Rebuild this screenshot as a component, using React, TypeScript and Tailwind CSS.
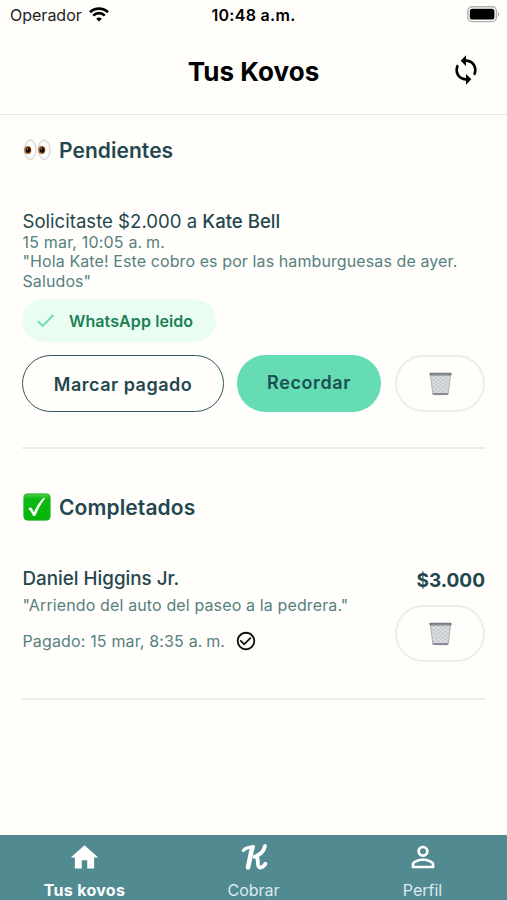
import React from "react";
import {
  MdCheck,
  MdCheckCircleOutline,
  MdHome,
  MdPersonOutline,
  MdSync,
} from "react-icons/md";

function WifiIcon() {
  return (
    <svg width="20" height="15" viewBox="0 0 20 15" fill="none" stroke="#000" strokeWidth="2.7">
      <path d="M1 5.3a12.8 12.8 0 0 1 18 0" />
      <path d="M4.2 8.6a8.2 8.2 0 0 1 11.6 0" />
      <path d="M10 14.6 7.2 11.8a4 4 0 0 1 5.6 0Z" fill="#000" stroke="none" />
    </svg>
  );
}

function BatteryIcon() {
  return (
    <svg width="33" height="17" viewBox="0 0 33 17">
      <rect x="0.8" y="0.8" width="28.6" height="14.8" rx="4.4" fill="none" stroke="#b0b0ae" strokeWidth="1.4" />
      <rect x="2.8" y="2.8" width="24.6" height="10.8" rx="2.6" fill="#000" />
      <path d="M31 5.8c1.6.7 1.6 4.1 0 4.8Z" fill="#b0b0ae" />
    </svg>
  );
}

function EyesIcon() {
  return (
    <svg width="28" height="28" viewBox="0 0 28 28">
      <defs>
        <radialGradient id="eyeWhite">
          <stop offset="0.7" stopColor="#fefefe" />
          <stop offset="1" stopColor="#e6e4e7" />
        </radialGradient>
      </defs>
      {[7.2, 21.2].map((cx) => (
        <g key={cx}>
          <ellipse cx={cx} cy="13.7" rx="6" ry="10" fill="url(#eyeWhite)" stroke="#d4d2d4" strokeWidth="0.9" />
          <ellipse cx={cx - 2.4} cy="14" rx="3.5" ry="3.9" fill="#a05c22" />
          <ellipse cx={cx - 2} cy="14" rx="2.3" ry="2.7" fill="#170b06" />
          <circle cx={cx - 2.9} cy="12.8" r="0.6" fill="#fff" />
        </g>
      ))}
    </svg>
  );
}

function DoneIcon() {
  return (
    <svg width="28" height="28" viewBox="0 0 28 28">
      <defs>
        <linearGradient id="doneGreen" x1="0" y1="0" x2="0" y2="1">
          <stop offset="0" stopColor="#4fcf4f" />
          <stop offset="0.2" stopColor="#0cba0f" />
          <stop offset="1" stopColor="#05b709" />
        </linearGradient>
      </defs>
      <rect x="0.8" y="0.8" width="26.4" height="26.4" rx="3.6" fill="url(#doneGreen)" stroke="#29ad2c" strokeWidth="0.8" />
      <path d="M5.2 15.4 7.6 14.2c1.5 1.5 2.5 3 3.5 5 2.3-5.6 5.3-10.2 9.2-14.1l2 .2C18 10.7 14.7 16.6 12.3 23h-2.1c-1.3-3-2.8-5.5-5-7.6Z" fill="#fff" />
    </svg>
  );
}

function TrashIcon() {
  return (
    <svg width="23" height="24" viewBox="0 0 24 25">
      <defs>
        <pattern id="mesh" width="5" height="4" patternUnits="userSpaceOnUse">
          <path d="M0 0 5 4M5 0 0 4" stroke="#a9adb6" strokeWidth="0.7" />
        </pattern>
      </defs>
      <path d="M1.4 2h21.2l-2.5 21.2c-.1.7-16.1.7-16.2 0Z" fill="#e4e6e9" />
      <path d="M1.4 2h21.2l-2.5 21.2c-.1.7-16.1.7-16.2 0Z" fill="url(#mesh)" stroke="#a0a3aa" strokeWidth="0.8" />
      <path d="M4 22h16l-.3 1.9H4.3Z" fill="#8a8d98" />
      <rect x="0.5" y="0.7" width="23" height="2.9" rx="1" fill="#73757e" />
      <path d="M2.5 2.3h19" stroke="#a3a5ae" strokeWidth="0.7" />
    </svg>
  );
}

function KovoLogo() {
  return (
    <svg width="28" height="28" viewBox="0 0 28 28" fill="none" stroke="#fff" strokeLinecap="round" strokeLinejoin="round">
      <path d="M3.4 7.4C5.6 4.6 8.5 4.2 13.4 3.6" strokeWidth="3.2" />
      <path d="M12.4 4.8C10.4 11 9.800 17 8 24.400" strokeWidth="4.600" />
      <path d="M25 3C23.800 8.200 19.500 12.200 14.500 13.900" strokeWidth="3.800" />
      <path d="M16.400 13.600C19.400 15.800 16.200 23.800 19.700 24.500C22 24.800 23.800 23.300 25.400 20.800" strokeWidth="3.800" />
    </svg>
  );
}

function DeleteButton() {
  return (
    <button aria-label="Eliminar" className="flex h-[57px] w-[90px] items-center justify-center rounded-full border-2 border-[#ededeb]">
      <TrashIcon />
    </button>
  );
}

function Tab({ icon, label, active = false }: { icon: React.ReactNode; label: string; active?: boolean }) {
  return (
    <a className={`flex flex-1 flex-col items-center pt-[4px] ${active ? "font-bold tracking-[0.3px] text-white" : "text-[#dcebed]"}`}>
      <span className="flex h-[36px] items-center text-white">{icon}</span>
      <span className="mt-[5px] whitespace-nowrap text-[16px] leading-[20px]">{label}</span>
    </a>
  );
}

export default function App() {
  return (
    <div className="flex h-[900px] w-[507px] flex-col overflow-hidden bg-[#fffefb] font-['Inter',sans-serif] text-[#24474f]">
      <div className="grid h-[30px] grid-cols-[1fr_auto_1fr] items-center px-[10px] text-[16px] leading-[20px] text-black">
        <div className="flex items-center gap-[7px] pb-px">
          <span className="text-[#222]">Operador</span>
          <WifiIcon />
        </div>
        <span className="pb-px font-semibold tracking-[0.3px]">10:48 a.m.</span>
        <div className="-mr-[3px] flex justify-end pb-[1px]">
          <BatteryIcon />
        </div>
      </div>

      <header className="grid h-[85px] grid-cols-[1fr_auto_1fr] items-center border-b-[1.5px] border-[#e6e6e4] px-[25px]">
        <h1 className="col-start-2 text-[26px] leading-[32px] font-bold tracking-[0.05px] text-black">Tus Kovos</h1>
        <button aria-label="Actualizar" className="justify-self-end pb-[4px] text-black">
          <MdSync size={32} />
        </button>
      </header>

      <main className="flex flex-1 flex-col px-[22px]">
        <h2 className="mt-[21px] flex h-[28px] items-center gap-[8px] pl-[1px] text-[21px] font-semibold tracking-[0.05px]">
          <EyesIcon />
          <span className="pt-[2px]">Pendientes</span>
        </h2>

        <section className="mt-[47px] flex h-[238px] flex-col border-b-2 border-[#ececea]">
          <p className="pl-[0.5px] text-[18.6px] leading-[21px]">
            Solicitaste $2.000 a <span className="font-medium">Kate Bell</span>
          </p>
          <p className="pl-[0.5px] text-[16px] leading-[20px] tracking-[0.18px] text-[#56817f]">
            15 mar, 10:05 <span className="[word-spacing:-1px]">a. m.</span>
          </p>
          <p className="pl-[0.5px] text-[16px] leading-[19.5px] tracking-[0.1px] text-[#56817f]">
            "Hola Kate! Este cobro es por las hamburguesas de ayer.
            <br />
            Saludos"
          </p>
          <div className="mt-[8px] flex h-[43px] w-[194px] items-center rounded-full bg-[#e9fdf3] pl-[12px] text-[16px] font-semibold tracking-[0.1px] text-[#1c8054]">
            <MdCheck size={23} className="mr-[12px] text-[#6cdcb0]" />
            WhatsApp leido
          </div>
          <div className="mt-[13px] flex">
            <button className="h-[57px] w-[202px] rounded-full border border-[#34565e] pt-px text-[18px] font-semibold tracking-[0.5px]">
              Marcar pagado
            </button>
            <button className="ml-[13px] h-[57px] w-[144px] rounded-full bg-[#65dcb3] pb-[3px] text-[18px] font-semibold tracking-[0.6px] text-[#1b5053]">
              Recordar
            </button>
            <div className="ml-auto">
              <DeleteButton />
            </div>
          </div>
        </section>

        <h2 className="mt-[44px] flex h-[28px] items-center gap-[8px] pl-[1px] text-[21px] font-semibold tracking-[0.1px]">
          <DoneIcon />
          <span className="pt-[2px]">Completados</span>
        </h2>

        <section className="mt-[46px] flex h-[133px] justify-between border-b-2 border-[#ececea]">
          <div className="pl-[0.5px]">
            <p className="text-[18.8px] leading-[24px] font-medium">Daniel Higgins Jr.</p>
            <p className="mt-[4px] text-[16px] leading-[20px] tracking-[0.13px] text-[#56817f]">"Arriendo del auto del paseo a la pedrera."</p>
            <p className="mt-[15px] flex items-center text-[16px] leading-[22px] tracking-[0.15px] text-[#56817f]">
              <span>
                Pagado: 15 mar, 8:35 <span className="[word-spacing:-1px]">a. m.</span>
              </span>
              <MdCheckCircleOutline size={22} className="ml-[10px] text-[#111]" />
            </p>
          </div>
          <div className="flex flex-col items-end">
            <p className="mt-[2px] mb-[12px] text-[19px] leading-[24px] font-bold">$3.000</p>
            <DeleteButton />
          </div>
        </section>
      </main>

      <nav className="flex h-[65px] bg-[#518a91]">
        <Tab icon={<MdHome size={33} />} label="Tus kovos" active />
        <Tab icon={<KovoLogo />} label="Cobrar" />
        <Tab icon={<MdPersonOutline size={34} />} label="Perfil" />
      </nav>
    </div>
  );
}
